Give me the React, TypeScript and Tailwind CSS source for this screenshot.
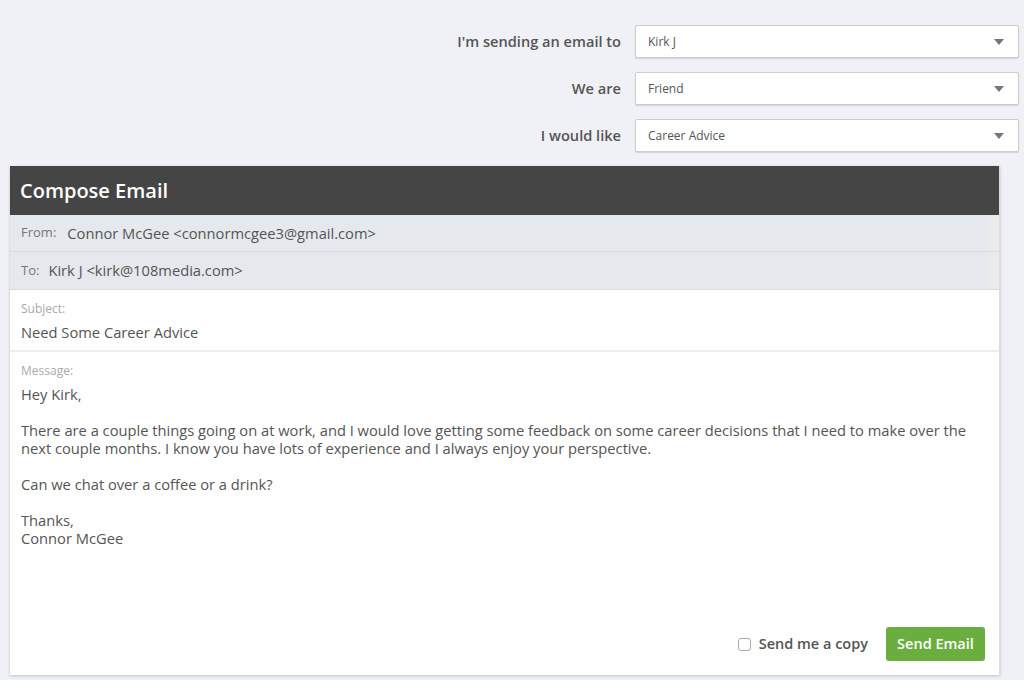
import React from "react";

const selects = [
  { label: "I'm sending an email to", value: "Kirk J" },
  { label: "We are", value: "Friend" },
  { label: "I would like", value: "Career Advice" },
];

function Caret() {
  return (
    <svg width="10" height="6" viewBox="0 0 10 6" className="fill-[#777]">
      <path d="M0 0 L10 0 L5 6 Z" />
    </svg>
  );
}

export default function App() {
  return (
    <div
      className="w-[1024px] h-[680px] overflow-hidden bg-[#f0f1f6] text-[#555]"
      style={{ fontFamily: "'Open Sans', sans-serif" }}
    >
      {/* selectors */}
      <div className="flex flex-col gap-[14px] pt-[25px] pr-[5px]">
        {selects.map((s) => (
          <div key={s.label} className="flex items-center justify-end gap-[14px]">
            <div className="text-[14.6px] font-semibold text-[#555]">{s.label}</div>
            <div className="w-[384px] h-[33px] flex items-center justify-between pl-[12px] pr-[14px] bg-white border border-[#ccc] rounded-[2px] shadow-[0_1px_1px_rgba(0,0,0,0.12)]">
              <span className="text-[12px] text-[#555]">{s.value}</span>
              <Caret />
            </div>
          </div>
        ))}
      </div>

      {/* compose card */}
      <div className="mt-[14px] ml-[10px] w-[990px] h-[509px] bg-white border-r border-[#ddd] shadow-[0_1px_3px_rgba(0,0,0,0.2)] flex flex-col">
        <div className="h-[49px] bg-[#454545] flex items-center px-[10px]">
          <h1 className="text-[20px] font-semibold text-white">Compose Email</h1>
        </div>
        <div className="flex h-[37px] border-b border-[#d8dbe0]">
          <div className="flex-1 bg-[#e5e8ed] flex items-center pl-[11px] gap-[11px]">
            <span className="text-[13px] text-[#777]">From:</span>
            <span className="text-[14.7px] text-[#555]">Connor McGee &lt;connormcgee3@gmail.com&gt;</span>
          </div>
          <div className="w-[11px] bg-[#ebebeb]" />
        </div>
        <div className="flex h-[38px] border-b border-[#d8dbe0]">
          <div className="flex-1 bg-[#e5e8ed] flex items-center pl-[11px] gap-[9px]">
            <span className="text-[13px] text-[#777]">To:</span>
            <span className="text-[14.7px] text-[#555]">Kirk J &lt;kirk@108media.com&gt;</span>
          </div>
          <div className="w-[11px] bg-[#ebebeb]" />
        </div>
        <div className="h-[62px] border-b-2 border-[#eee] pl-[11px] pt-[10px]">
          <div className="text-[12px] text-[#aaa] leading-[18px]">Subject:</div>
          <div className="text-[14.7px] text-[#555] leading-[18px] mt-[5px]">Need Some Career Advice</div>
        </div>
        <div className="flex-1 flex flex-col pl-[11px] pr-[14px] pt-[10px]">
          <div className="text-[12px] text-[#aaa] leading-[18px]">Message:</div>
          <div className="text-[14.7px] text-[#555] leading-[18px] mt-[5px]">
            <p>Hey Kirk,</p>
            <p className="mt-[18px]">
              There are a couple things going on at work, and I would love getting some feedback on some career decisions that I need to make over the next couple months. I know you have lots of experience and I always enjoy your perspective.
            </p>
            <p className="mt-[18px]">Can we chat over a coffee or a drink?</p>
            <p className="mt-[18px]">
              Thanks,
              <br />
              Connor McGee
            </p>
          </div>
          <div className="mt-auto mb-[14px] flex items-center justify-end gap-[18px]">
            <label className="flex items-center gap-[8px]">
              <span className="w-[13px] h-[13px] border border-[#aaa] rounded-[3px] bg-white" />
              <span className="text-[14.5px] font-semibold text-[#555]">Send me a copy</span>
            </label>
            <button className="h-[34px] w-[99px] bg-[#6aae3f] rounded-[3px] text-white text-[14.5px] font-semibold">
              Send Email
            </button>
          </div>
        </div>
      </div>
    </div>
  );
}
